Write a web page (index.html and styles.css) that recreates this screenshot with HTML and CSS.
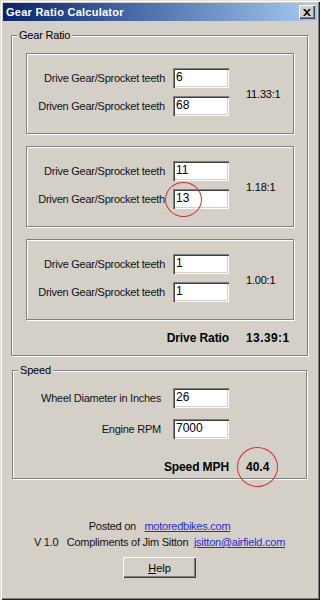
FILE: index.html
```html
<!DOCTYPE html>
<html>
<head>
<meta charset="utf-8">
<title>Gear Ratio Calculator</title>
<link rel="stylesheet" href="styles.css">
</head>
<body>
<div class="window">
  <div class="titlebar">
    <span class="title">Gear Ratio Calculator</span>
    <span class="close"><svg width="8" height="7" viewBox="0 0 8 7"><path d="M0 0h2l2 2.2L6 0h2L5 3.5 8 7H6L4 4.8 2 7H0l3-3.5z" fill="#000"/></svg></span>
  </div>
  <div class="content">
    <fieldset class="group group-gear">
      <legend>Gear Ratio</legend>
      <div class="panels">
        <div class="panel">
          <label class="lbl">Drive Gear/Sprocket teeth</label>
          <div class="field"><input class="box" value="6"></div>
          <div class="ratio">11.33:1</div>
          <label class="lbl">Driven Gear/Sprocket teeth</label>
          <div class="field"><input class="box" value="68"></div>
        </div>
        <div class="panel">
          <label class="lbl">Drive Gear/Sprocket teeth</label>
          <div class="field"><input class="box" value="11"></div>
          <div class="ratio">1.18:1</div>
          <label class="lbl">Driven Gear/Sprocket teeth</label>
          <div class="field"><input class="box" value="13"><span class="circle circle-input"></span></div>
        </div>
        <div class="panel">
          <label class="lbl">Drive Gear/Sprocket teeth</label>
          <div class="field"><input class="box" value="1"></div>
          <div class="ratio">1.00:1</div>
          <label class="lbl">Driven Gear/Sprocket teeth</label>
          <div class="field"><input class="box" value="1"></div>
        </div>
      </div>
      <div class="total">
        <span class="total-label">Drive Ratio</span>
        <span class="total-value">13.39:1</span>
      </div>
    </fieldset>

    <fieldset class="group group-speed">
      <legend>Speed</legend>
      <div class="speed-grid">
        <label class="lbl">Wheel Diameter in Inches</label>
        <div class="field"><input class="box" value="26"></div>
        <label class="lbl">Engine RPM</label>
        <div class="field"><input class="box" value="7000"></div>
        <span class="total-label speed-label">Speed MPH</span>
        <span class="total-value speed-value">40.4<span class="circle circle-value"></span></span>
      </div>
    </fieldset>

    <div class="footer">
      <div class="line">Posted on&nbsp;&nbsp; <a class="link">motoredbikes.com</a></div>
      <div class="line">V 1.0&nbsp;&nbsp; Compliments of Jim Sitton&nbsp; <a class="link">jsitton@airfield.com</a></div>
      <button class="btn"><u>H</u>elp</button>
    </div>
  </div>
</div>
</body>
</html>
```
FILE: styles.css
```css
html, body {
  margin: 0;
  padding: 0;
  background: #d4d0c8;
}
body {
  font-family: "Liberation Sans", Arial, sans-serif;
  font-size: 11px;
  color: #000;
}
.window {
  width: 320px;
  height: 600px;
  box-sizing: border-box;
  background: #d4d0c8;
  padding: 3px;
  box-shadow: inset 1px 1px 0 #e4e1dc, inset 2px 2px 0 #ffffff, inset -1px -1px 0 #202020, inset -2px -2px 0 #808080;
  display: flex;
  flex-direction: column;
}
.titlebar {
  height: 18px;
  flex: none;
  display: flex;
  align-items: center;
  justify-content: space-between;
  background: linear-gradient(to right, #0a246a, #3d5f9e 35%, #a6caf0);
  padding-left: 3px;
}
.title {
  color: #fff;
  font-weight: bold;
  font-size: 11px;
  letter-spacing: 0.25px;
}
.close {
  width: 16px;
  height: 14px;
  margin-right: 2px;
  box-sizing: border-box;
  background: #d4d0c8;
  display: flex;
  align-items: center;
  justify-content: center;
  box-shadow: inset 1px 1px 0 #fff, inset -1px -1px 0 #404040, inset -2px -2px 0 #808080;
}
.content {
  padding: 8px 9px 0 8px;
}
.group {
  margin: 0;
  padding: 0;
  border: 1px solid #808080;
  box-shadow: 1px 1px 0 #fff, inset 1px 1px 0 #fff;
  min-width: 0;
}
.group legend {
  margin-left: 5px;
  padding: 0 2px;
  font-size: 11px;
  line-height: 13px;
  letter-spacing: -0.2px;
  background: #d4d0c8;
}
.panels {
  margin: 11px 13px 0 14px;
  display: flex;
  flex-direction: column;
  gap: 12px;
}
.panel {
  height: 81px;
  box-sizing: border-box;
  border: 1px solid #808080;
  box-shadow: inset 1px 1px 0 #fff, 1px 1px 0 #fff;
  padding-top: 14px;
  display: grid;
  grid-template-columns: 138px 56px auto;
  grid-template-rows: 20px 20px;
  column-gap: 8px;
  row-gap: 8px;
}
.lbl {
  grid-column: 1;
  text-align: right;
  align-self: center;
  white-space: nowrap;
  letter-spacing: -0.25px;
  color: #111;
}
.field {
  grid-column: 2;
  position: relative;
  width: 56px;
  height: 20px;
}
.box {
  width: 56px;
  height: 20px;
  box-sizing: border-box;
  margin: 0;
  border: none;
  padding: 0 3px 2px;
  background: #fff;
  font-family: "Liberation Sans", Arial, sans-serif;
  font-size: 12px;
  color: #000;
  box-shadow: inset 1px 1px 0 #808080, inset 2px 2px 0 #404040, inset -1px -1px 0 #fff, inset -2px -2px 0 #d4d0c8;
  outline: none;
}
.ratio {
  grid-column: 3;
  grid-row: 1 / span 2;
  align-self: center;
  margin: 4px 0 0 9px;
  letter-spacing: -0.2px;
}
.total {
  display: grid;
  grid-template-columns: 202px auto;
  column-gap: 17px;
  margin: 11px 0 0 15px;
  height: 14px;
  padding-bottom: 10px;
  line-height: 14px;
}
.total-label, .total-value {
  font-weight: bold;
  font-size: 12px;
  letter-spacing: -0.1px;
}
.total-label {
  text-align: right;
}
.total-value {
  letter-spacing: 0.4px;
}
.group-speed {
  margin: 8px 1px 0 1px;
}
.speed-grid {
  padding: 11px 0 14px 0;
  display: grid;
  grid-template-columns: 148px 56px auto;
  grid-template-rows: 20px 20px 14px;
  column-gap: 12px;
  row-gap: 11px;
}
.speed-label {
  grid-column: 1 / span 2;
  grid-row: 3;
  margin-top: 10px;
  line-height: 14px;
}
.speed-value {
  grid-column: 3;
  grid-row: 3;
  margin: 10px 0 0 5px;
  line-height: 14px;
  position: relative;
  justify-self: start;
  letter-spacing: 0;
}
.circle {
  position: absolute;
  border: 1.5px solid #d8302e;
  border-radius: 50%;
  box-sizing: border-box;
  pointer-events: none;
}
.circle-input {
  left: -8px;
  top: -7px;
  width: 37px;
  height: 35px;
}
.circle-value {
  left: -9px;
  top: -13px;
  width: 41px;
  height: 40px;
}
.footer {
  padding-top: 39px;
  display: flex;
  flex-direction: column;
  align-items: center;
}
.line {
  line-height: 16px;
  letter-spacing: -0.25px;
  white-space: nowrap;
  color: #111;
}
.link {
  color: #2a2ad0;
  text-decoration: underline;
}
.btn {
  margin-top: 7px;
  width: 73px;
  height: 21px;
  border: none;
  background: #d4d0c8;
  font-family: "Liberation Sans", Arial, sans-serif;
  font-size: 11px;
  color: #000;
  padding: 0;
  box-shadow: inset 1px 1px 0 #fff, inset -1px -1px 0 #404040, inset -2px -2px 0 #808080;
}
```
